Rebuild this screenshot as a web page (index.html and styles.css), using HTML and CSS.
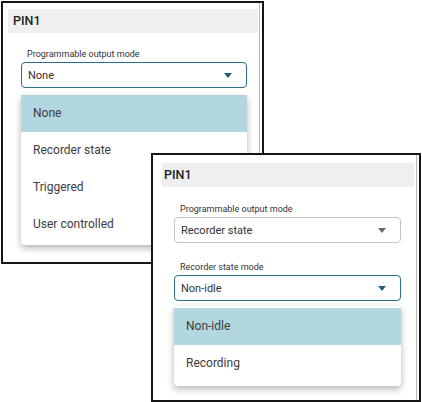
FILE: index.html
```html
<!DOCTYPE html>
<html lang="en">
<head>
  <meta charset="UTF-8">
  <title>PIN1 output mode</title>
  <link rel="stylesheet" href="styles.css">
</head>
<body>
  <div class="stage">

    <div class="panel panel-one">
      <div class="panel-title">PIN1</div>
      <div class="field">
        <label>Programmable output mode</label>
        <div class="select focused">
          <span>None</span>
          <svg class="caret" width="8" height="5" viewBox="0 0 8 5"><path d="M0 0h8L4 5z"/></svg>
        </div>
        <ul class="menu">
          <li class="selected">None</li>
          <li>Recorder state</li>
          <li>Triggered</li>
          <li>User controlled</li>
        </ul>
      </div>
    </div>

    <div class="panel panel-two">
      <div class="panel-title">PIN1</div>
      <div class="field">
        <label>Programmable output mode</label>
        <div class="select">
          <span>Recorder state</span>
          <svg class="caret" width="8" height="5" viewBox="0 0 8 5"><path d="M0 0h8L4 5z"/></svg>
        </div>
      </div>
      <div class="field">
        <label>Recorder state mode</label>
        <div class="select focused">
          <span>Non-idle</span>
          <svg class="caret" width="8" height="5" viewBox="0 0 8 5"><path d="M0 0h8L4 5z"/></svg>
        </div>
        <ul class="menu">
          <li class="selected">Non-idle</li>
          <li>Recording</li>
        </ul>
      </div>
    </div>

  </div>
</body>
</html>
```

FILE: styles.css
```css
body { margin: 0; background: #fff; font-family: Roboto, "Noto Sans", sans-serif; color: #333; }
.stage { position: relative; width: 422px; height: 402px; overflow: hidden; }

.panel { position: absolute; background: #fff; border: 2px solid #161616; box-sizing: border-box; box-shadow: inset -2px 0 0 #fff, inset -3px 0 0 #bbb; }
.panel-one { left: 1px; top: 1px; width: 263px; height: 263px; padding: 6px 4px 0 5px; }
.panel-two { left: 151px; top: 153px; width: 270px; height: 249px; padding: 8px 5px 0 9px; }

.panel-title { background: #efefef; height: 24px; line-height: 24px; padding-left: 5px; font-size: 12.5px; font-weight: 500; color: #222; }
.panel-two .panel-title { padding-left: 2px; }

.field { position: relative; margin: 15px 0 0 13px; width: 226px; }
.panel-two .field { margin: 16px 0 0 12px; width: 227px; }
.panel-two .field + .field { margin-top: 18px; }

label { display: block; font-size: 9px; line-height: 12px; padding-left: 6px; margin-bottom: 2px; color: #333; }

.select { display: flex; align-items: center; justify-content: space-between; height: 26px; box-sizing: border-box; border: 1px solid #c4c4c4; border-radius: 4px; padding: 0 14px 0 6px; font-size: 11px; color: #333; }
.select.focused { border: 1.5px solid #2f6d8a; }
.caret { fill: #6a6a6a; }
.select.focused .caret { fill: #1f5f80; }

.menu { position: absolute; left: 0; right: 0; top: 47px; margin: 0; padding: 0 0 2px; list-style: none; background: #fff; border-radius: 4px; box-shadow: 0 3px 7px rgba(0, 0, 0, 0.3); }
.menu li { height: 37px; line-height: 37px; padding-left: 12px; font-size: 12px; color: #3c3c3c; }
.menu li.selected { background: #b2d7e0; }
.panel-two .menu { top: 45px; padding: 2px 0 4px; }
```
